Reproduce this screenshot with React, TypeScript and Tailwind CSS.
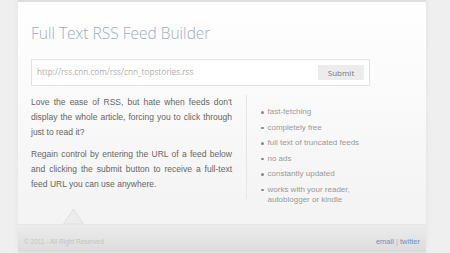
import React from 'react';

const features = [
  'fast-fetching',
  'completely free',
  'full text of truncated feeds',
  'no ads',
  'constantly updated',
  'works with your reader, autoblogger or kindle',
];

const App = () => {
  return (
    <div className="w-[450px] h-[253px] overflow-hidden bg-[#efefef] font-['Liberation_Sans',Arial,sans-serif]">
      <div className="ml-[18px] w-[408px] shadow-[0_0_6px_rgba(0,0,0,0.06)]">
        <div className="h-[2px] bg-[#dedede]" />

        {/* Main panel */}
        <div className="relative h-[222px] bg-gradient-to-b from-white to-[#f3f3f3] px-[13px] pt-[21px]">
          <h1 className="font-['Open_Sans',sans-serif] font-light text-[15.5px] leading-[20px] text-[#98adc4]">
            Full Text RSS Feed Builder
          </h1>

          {/* URL form */}
          <div className="mt-[16px] w-[339px] h-[27px] border border-[#e2e2e2] bg-white flex items-center justify-between pl-[5px] pr-[5px]">
            <span className="font-['Open_Sans',sans-serif] text-[8.2px] text-[#b0b0b0]">
              http://rss.cnn.com/rss/cnn_topstories.rss
            </span>
            <button className="w-[46px] h-[15px] bg-[#ececec] font-['Open_Sans',sans-serif] text-[8px] text-[#777] flex items-center justify-center">
              Submit
            </button>
          </div>

          {/* Columns */}
          <div className="mt-[9px] flex">
            <div className="w-[201px] text-[8.5px] leading-[15px] text-[#666] text-justify">
              <p>
                Love the ease of RSS, but hate when feeds don't display the whole article, forcing you to click through
                just to read it?
              </p>
              <p className="mt-[7px]">
                Regain control by entering the URL of a feed below and clicking the submit button to receive a full-text
                feed URL you can use anywhere.
              </p>
            </div>
            <div className="ml-[14px] w-px h-[104px] bg-[#e6e6e6]" />
            <ul className="ml-[14px] pt-[12px] w-[110px] text-[8px] leading-[10px] text-[#999] flex flex-col gap-[5.5px]">
              {features.map((f) => (
                <li key={f} className="flex">
                  <span className="w-[2.5px] h-[2.5px] mt-[4px] mr-[4px] shrink-0 rounded-full bg-[#888]" />
                  <span>{f}</span>
                </li>
              ))}
            </ul>
          </div>

          {/* Notch */}
          <svg className="absolute left-[45px] bottom-0" width="21" height="16" viewBox="0 0 21 16">
            <polygon points="0.5,16 10.5,1 20.5,16" fill="#ececec" stroke="#e0e0e0" strokeWidth="1" />
          </svg>
        </div>

        {/* Footer */}
        <div className="h-[28px] bg-gradient-to-b from-[#ececec] to-[#dcdcdc] border-t border-[#e6e6e6] flex items-end justify-between px-[6px] pb-[5px]">
          <span className="text-[6.5px] text-[#c4c4c4]">© 2011 - All Right Reserved</span>
          <span className="text-[7.5px] text-[#6f8fbd]">
            email <span className="text-[#b5b5b5]">|</span> twitter
          </span>
        </div>
      </div>
    </div>
  );
};

export default App;
